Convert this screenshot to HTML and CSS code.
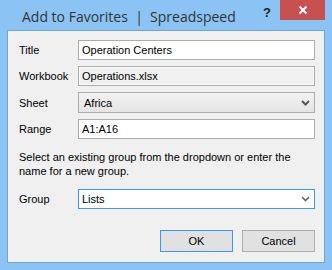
FILE: index.html
```html
<!DOCTYPE html>
<html>
<head>
<meta charset="utf-8">
<link rel="stylesheet" href="styles.css">
</head>
<body>
<div class="window">
  <div class="titlebar">
    <div class="title">Add to Favorites&nbsp; |&nbsp; Spreadspeed</div>
    <div class="help">?</div>
    <div class="close">
      <svg width="10" height="10" viewBox="0 0 10 10"><path d="M1.5 1.5 L8.5 8.5 M8.5 1.5 L1.5 8.5" stroke="#fff" stroke-width="2" fill="none"/></svg>
    </div>
  </div>
  <div class="client">
    <div class="form">
      <div class="label">Title</div>
      <div class="field text">Operation Centers</div>
      <div class="label">Workbook</div>
      <div class="field readonly">Operations.xlsx</div>
      <div class="label">Sheet</div>
      <div class="field combo">
        <span>Africa</span>
        <svg class="chev" width="9" height="6" viewBox="0 0 9 6"><path d="M1 1 L4.5 4.5 L8 1" stroke="#555" stroke-width="2" fill="none"/></svg>
      </div>
      <div class="label">Range</div>
      <div class="field text">A1:A16</div>
    </div>
    <p class="hint">Select an existing group from the dropdown or enter the name for a new group.</p>
    <div class="form">
      <div class="label">Group</div>
      <div class="field text focus">
        <span>Lists</span>
        <svg class="chev" width="9" height="6" viewBox="0 0 9 6"><path d="M1 1 L4.5 4.5 L8 1" stroke="#666" stroke-width="1.6" fill="none"/></svg>
      </div>
    </div>
    <div class="buttons">
      <div class="btn default">OK</div>
      <div class="btn">Cancel</div>
    </div>
  </div>
</div>
</body>
</html>
```
FILE: styles.css
```css
html, body {
  margin: 0;
  padding: 0;
}
body {
  width: 332px;
  height: 270px;
  background: #8bc4f4;
  overflow: hidden;
  font-family: "Liberation Sans", Arial, sans-serif;
}
.window {
  width: 332px;
  height: 270px;
}
.titlebar {
  height: 30px;
  display: flex;
  align-items: flex-start;
  position: relative;
}
.title {
  padding-left: 22px;
  padding-top: 7px;
  font-family: "Open Sans", sans-serif;
  font-size: 14px;
  color: #333;
  letter-spacing: 0;
  flex: 1;
}
.help {
  font-family: "Liberation Sans", sans-serif;
  font-weight: bold;
  font-size: 13px;
  color: #222;
  padding-top: 5px;
  margin-right: 9px;
}
.close {
  width: 45px;
  height: 20px;
  background: #c75050;
  margin-right: 7px;
  display: flex;
  align-items: center;
  justify-content: center;
}
.client {
  margin-left: 7px;
  width: 316px;
  height: 231px;
  border: 1px solid #6ea6da;
  background: #f0f0f0;
  padding: 9px 9px 0 11px;
  box-sizing: content-box;
  width: 296px;
  height: 222px;
  font-size: 11px;
  color: #000;
}
.form {
  display: grid;
  grid-template-columns: 59px 237px;
  row-gap: 6px;
  align-items: center;
}
.field {
  height: 20px;
  box-sizing: border-box;
  border: 1px solid #abadb3;
  background: #fff;
  padding: 0 3px;
  display: flex;
  align-items: center;
  justify-content: space-between;
}
.readonly {
  background: #f0f0f0;
  box-shadow: inset 0 0 0 1px #fafafa;
  border-color: #adadad;
}
.combo {
  height: 21px;
  background: linear-gradient(#f2f2f2, #e5e5e5);
  border-color: #acacac;
  padding-left: 5px;
}
.focus {
  border-color: #3399ff;
}
.chev {
  margin-right: 1px;
}
.hint {
  margin: 11px 0 0 0;
  line-height: 14px;
  width: 290px;
}
.hint + .form {
  margin-top: 11px;
}
.buttons {
  display: flex;
  justify-content: flex-end;
  gap: 9px;
  margin-top: 21px;
  padding-right: 0;
}
.btn {
  width: 73px;
  height: 22px;
  box-sizing: border-box;
  border: 1px solid #adadad;
  background: #e1e1e1;
  display: flex;
  align-items: center;
  justify-content: center;
  font-size: 11px;
}
.btn.default {
  border-color: #3399ff;
}
```
